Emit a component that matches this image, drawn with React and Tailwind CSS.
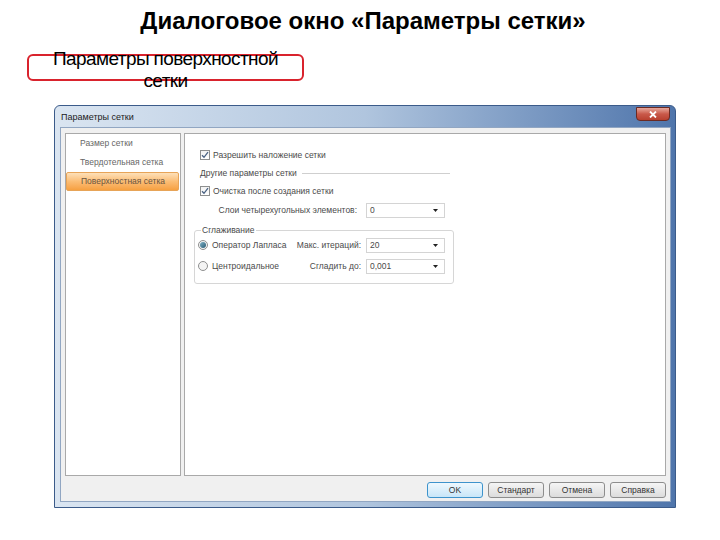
import React from "react";

const Check = () => (
  <div className="w-[10px] h-[10px] border border-[#8e8f8f] bg-linear-to-b from-[#f2f2f2] to-[#ffffff] flex items-center justify-center">
    <svg width="8" height="8" viewBox="0 0 8 8">
      <path d="M1 4.2 L3 6.3 L7 1.2" fill="none" stroke="#4a6283" strokeWidth="1.3" />
    </svg>
  </div>
);

const Radio = ({ on }) => (
  <div className="w-[10px] h-[10px] rounded-full border border-[#8e8f8f] bg-[#f4f4f4] flex items-center justify-center">
    {on && <div className="w-[6px] h-[6px] rounded-full bg-linear-to-br from-[#7fb3c8] to-[#2b5b73]" />}
  </div>
);

const Select = ({ value }) => (
  <div className="w-[79px] h-[15px] bg-white border border-[#d4d4d4] flex items-center justify-between pl-[3px] pr-[6px]">
    <span>{value}</span>
    <svg width="5" height="3" viewBox="0 0 5 3">
      <path d="M0 0 H5 L2.5 3 Z" fill="#222" />
    </svg>
  </div>
);

const Btn = ({ children, primary }) => (
  <div
    className={
      primary
        ? "w-[56px] h-[16px] rounded-[3px] border border-[#3d93cc] bg-linear-to-b from-[#eef8fe] to-[#c8e6f8] flex items-center justify-center"
        : "w-[56px] h-[16px] rounded-[3px] border border-[#8d8d8d] bg-linear-to-b from-[#f5f5f5] to-[#dcdcdc] flex items-center justify-center"
    }
  >
    {children}
  </div>
);

const App = () => {
  return (
    <div className="w-[720px] h-[540px] bg-white overflow-hidden font-['Liberation_Sans',Arial,sans-serif]">
      {/* slide title */}
      <div className="h-[44px] pt-[7px] pl-[6px] text-center text-[24px] leading-[28px] font-bold text-black">
        Диалоговое окно «Параметры сетки»
      </div>

      {/* callout */}
      <div className="h-[61px] pt-[10px]">
        <div className="relative ml-[27px] w-[277px] h-[27px] border-2 border-[#d9232d] rounded-[6px]">
          <div className="absolute left-0 right-0 top-[-8px] text-center text-[19px] leading-[22px] tracking-[-0.6px] text-black">
            Параметры поверхностной
            <br />
            сетки
          </div>
        </div>
      </div>

      {/* dialog window */}
      <div className="ml-[54px] w-[622px] h-[403px] flex flex-col border border-[#3b5b8a] rounded-t-[6px] bg-linear-to-r from-[#dae5f1] via-[#b0c5de] to-[#4f75ab]">
        <div className="h-[21px] flex items-start justify-between pl-[6px]">
          <span className="mt-[6px] text-[9px] leading-[10px] text-[#1b1b1b]">Параметры сетки</span>
          <div className="mt-[1px] mr-[5px] w-[34px] h-[14px] rounded-b-[4px] border border-[#6b2a22] bg-linear-to-b from-[#e6a79c] via-[#c9594a] to-[#b8402f] flex items-center justify-center">
            <svg width="8" height="7" viewBox="0 0 8 7">
              <path d="M1 0.5 L7 6.5 M7 0.5 L1 6.5" stroke="#fff" strokeWidth="1.8" />
            </svg>
          </div>
        </div>

        <div className="ml-[5px] mr-[4px] mb-[5px] flex-1 bg-[#f0f0f0] border border-[#91a6c2] flex flex-col pl-[4px] pr-[4px] pt-[5px] text-[8.5px] text-[#4a4a4a]">
          <div className="flex gap-[3px]">
            {/* left nav */}
            <div className="w-[116px] h-[343px] bg-white border border-[#a9a9a9] pr-[1px]">
              <div className="h-[19px] flex items-center pl-[14px] text-[#666]">Размер сетки</div>
              <div className="h-[19px] flex items-center pl-[14px] text-[#666]">Твердотельная сетка</div>
              <div className="h-[19px] flex items-center pl-[14px] text-[#6a5440] rounded-[2px] border border-[#e7a458] bg-linear-to-b from-[#fde0b8] via-[#fbbd74] to-[#f6a040]">
                Поверхностная сетка
              </div>
            </div>

            {/* right pane */}
            <div className="w-[482px] h-[343px] bg-white border border-[#a9a9a9] pl-[15px]">
              <div className="mt-[14px] h-[14px] flex items-center gap-[3px]">
                <Check />
                <span>Разрешить наложение сетки</span>
              </div>
              <div className="mt-[4px] h-[14px] flex items-center">
                <span>Другие параметры сетки</span>
                <div className="ml-[5px] w-[148px] h-px bg-[#cfcfcf]" />
              </div>
              <div className="mt-[4px] h-[14px] flex items-center gap-[3px]">
                <Check />
                <span>Очистка после создания сетки</span>
              </div>
              <div className="mt-[5px] h-[15px] flex items-center">
                <span className="w-[157px] text-right">Слои четырехугольных элементов:</span>
                <div className="ml-[9px]">
                  <Select value="0" />
                </div>
              </div>

              <div className="relative mt-[12px] ml-[-6px] w-[260px] h-[54px] border border-[#d6d6d6] rounded-[3px] pl-[3px] pr-[8px] pt-[6px]">
                <span className="absolute top-[-7px] left-[6px] bg-white px-[1px] leading-[12px]">Сглаживание</span>
                <div className="h-[16px] flex items-center">
                  <div className="flex-1 flex items-center gap-[4px]">
                    <Radio on />
                    <span>Оператор Лапласа</span>
                  </div>
                  <span className="text-right">Макс. итераций:</span>
                  <div className="ml-[5px]">
                    <Select value="20" />
                  </div>
                </div>
                <div className="mt-[5px] h-[16px] flex items-center">
                  <div className="flex-1 flex items-center gap-[4px]">
                    <Radio />
                    <span>Центроидальное</span>
                  </div>
                  <span className="text-right">Сгладить до:</span>
                  <div className="ml-[5px]">
                    <Select value="0,001" />
                  </div>
                </div>
              </div>
            </div>
          </div>

          <div className="mt-[6px] flex justify-end gap-[5px] text-[#333]">
            <Btn primary>OK</Btn>
            <Btn>Стандарт</Btn>
            <Btn>Отмена</Btn>
            <Btn>Справка</Btn>
          </div>
        </div>
      </div>
    </div>
  );
};

export default App;
